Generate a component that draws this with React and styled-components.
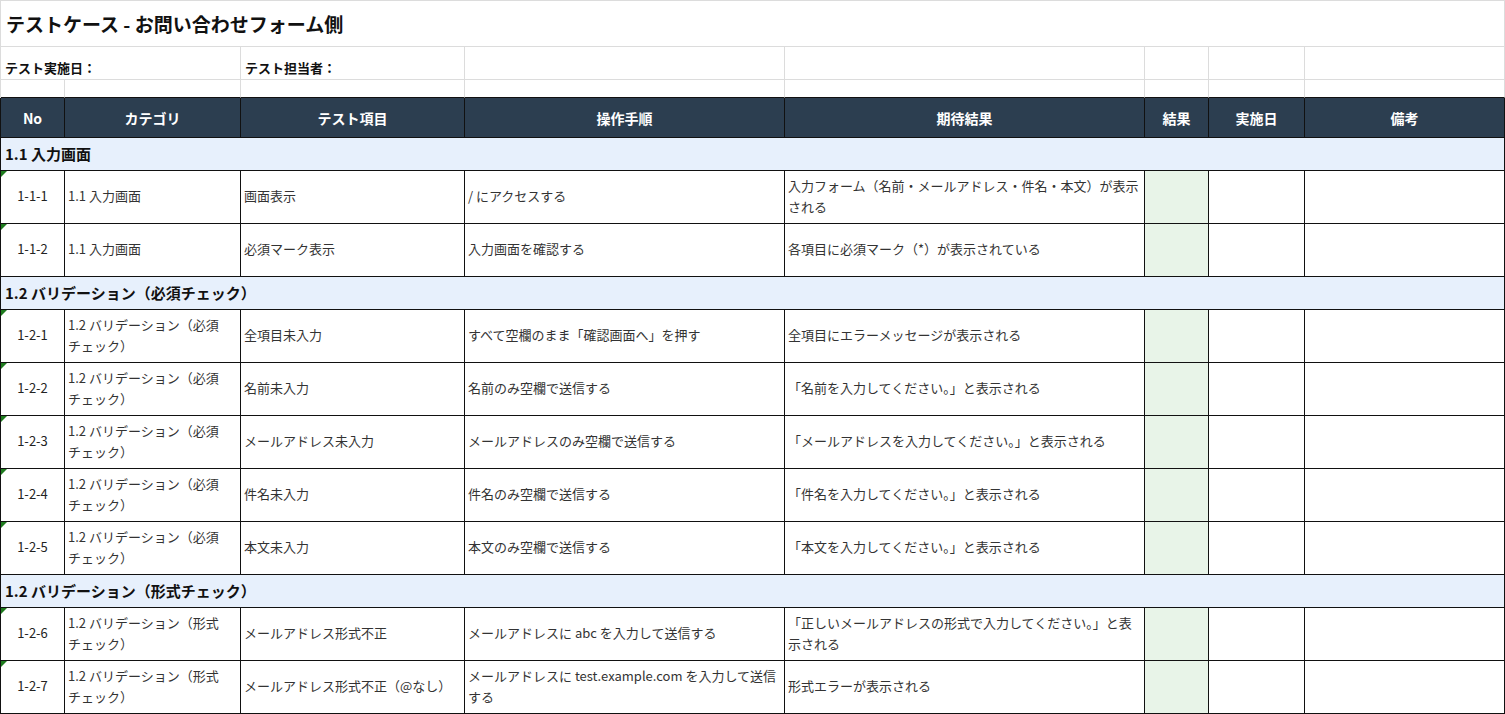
import React from 'react';
import styled, { createGlobalStyle } from 'styled-components';

const GlobalStyle = createGlobalStyle`
  html, body {
    margin: 0;
    padding: 0;
    background: #fff;
  }
  body {
    font-family: 'Noto Sans CJK JP', 'Noto Sans', sans-serif;
    color: #333;
  }
`;

const COLS = '64px 176px 224px 320px 360px 64px 96px 200px';
const GRID = '#dcdcdc';
const LINE = '#111';

const Sheet = styled.div`
  width: 1505px;
  border-top: 1px solid ${GRID};
  overflow: hidden;
`;

const Row = styled.div`
  display: grid;
  grid-template-columns: ${COLS};
  height: ${p => p.$h}px;
  border-left: 1px solid ${p => (p.$table ? LINE : GRID)};
`;

const Cell = styled.div`
  box-sizing: border-box;
  grid-column: ${p => p.$span || 'auto'};
  position: relative;
  display: flex;
  align-items: ${p => p.$align || 'center'};
  justify-content: ${p => (p.$center ? 'center' : 'flex-start')};
  padding: 0 3px;
  border-right: 1px solid ${p => p.$line || GRID};
  border-bottom: 1px solid ${p => p.$bottom || p.$line || GRID};
  background: ${p => p.$bg || 'transparent'};
  overflow: hidden;
`;

const Title = styled.span`
  font-size: 19px;
  font-weight: 700;
  color: #111;
  padding-left: 2px;
`;

const MetaLabel = styled.span`
  font-size: 13px;
  font-weight: 700;
  color: #111;
  line-height: 20px;
  padding: 0 0 1px 1px;
`;

const HeadCell = styled(Cell)`
  background: #2c3e50;
  color: #fff;
  font-size: 14px;
  font-weight: 700;
`;

const SectionCell = styled(Cell)`
  background: #e7f0fc;
  font-size: 15px;
  font-weight: 700;
  color: #111;
  padding: 0 0 2px 4px;
`;

const DataText = styled.span`
  font-size: 13px;
  line-height: 21px;
  color: #333;
  white-space: pre-line;
  padding-bottom: 3px;
`;

const NoText = styled(DataText)`
  color: #222;
`;

const Marker = styled.span`
  position: absolute;
  left: 0;
  top: 0;
  width: 0;
  height: 0;
  border-top: 6px solid #1e7b1e;
  border-right: 6px solid transparent;
`;

const headers = ['No', 'カテゴリ', 'テスト項目', '操作手順', '期待結果', '結果', '実施日', '備考'];

const sections = [
  {
    title: '1.1 入力画面',
    rows: [
      ['1-1-1', '1.1 入力画面', '画面表示', '/ にアクセスする', '入力フォーム（名前・メールアドレス・件名・本文）が表示\nされる'],
      ['1-1-2', '1.1 入力画面', '必須マーク表示', '入力画面を確認する', '各項目に必須マーク（*）が表示されている'],
    ],
  },
  {
    title: '1.2 バリデーション（必須チェック）',
    rows: [
      ['1-2-1', '1.2 バリデーション（必須\nチェック）', '全項目未入力', 'すべて空欄のまま「確認画面へ」を押す', '全項目にエラーメッセージが表示される'],
      ['1-2-2', '1.2 バリデーション（必須\nチェック）', '名前未入力', '名前のみ空欄で送信する', '「名前を入力してください。」と表示される'],
      ['1-2-3', '1.2 バリデーション（必須\nチェック）', 'メールアドレス未入力', 'メールアドレスのみ空欄で送信する', '「メールアドレスを入力してください。」と表示される'],
      ['1-2-4', '1.2 バリデーション（必須\nチェック）', '件名未入力', '件名のみ空欄で送信する', '「件名を入力してください。」と表示される'],
      ['1-2-5', '1.2 バリデーション（必須\nチェック）', '本文未入力', '本文のみ空欄で送信する', '「本文を入力してください。」と表示される'],
    ],
  },
  {
    title: '1.2 バリデーション（形式チェック）',
    rows: [
      ['1-2-6', '1.2 バリデーション（形式\nチェック）', 'メールアドレス形式不正', 'メールアドレスに abc を入力して送信する', '「正しいメールアドレスの形式で入力してください。」と表\n示される'],
      ['1-2-7', '1.2 バリデーション（形式\nチェック）', 'メールアドレス形式不正（@なし）', 'メールアドレスに test.example.com を入力して送信\nする', '形式エラーが表示される'],
    ],
  },
];

const DataRow = ({ row }) => {
  const [no, cat, item, step, expect] = row;
  return (
    <Row $h={53} $table>
      <Cell $line={LINE} $center>
        <Marker />
        <NoText>{no}</NoText>
      </Cell>
      <Cell $line={LINE}><DataText>{cat}</DataText></Cell>
      <Cell $line={LINE}><DataText>{item}</DataText></Cell>
      <Cell $line={LINE}><DataText>{step}</DataText></Cell>
      <Cell $line={LINE}><DataText>{expect}</DataText></Cell>
      <Cell $line={LINE} $bg="#e8f4e8" />
      <Cell $line={LINE} />
      <Cell $line={LINE} />
    </Row>
  );
};

const App = () => (
  <>
    <GlobalStyle />
    <Sheet>
      <Row $h={46}>
        <Cell $span="1 / -1"><Title>テストケース - お問い合わせフォーム側</Title></Cell>
      </Row>
      <Row $h={33}>
        <Cell $span="1 / 3" $align="flex-end"><MetaLabel>テスト実施日：</MetaLabel></Cell>
        <Cell $align="flex-end"><MetaLabel>テスト担当者：</MetaLabel></Cell>
        <Cell />
        <Cell />
        <Cell />
        <Cell />
        <Cell />
      </Row>
      <Row $h={18}>
        {headers.map(h => (
          <Cell key={h} $bottom={LINE} />
        ))}
      </Row>
      <Row $h={40} $table>
        {headers.map(h => (
          <HeadCell key={h} $line={LINE} $center>{h}</HeadCell>
        ))}
      </Row>
      {sections.map(sec => (
        <React.Fragment key={sec.title}>
          <Row $h={33} $table>
            <SectionCell $span="1 / -1" $line={LINE}>{sec.title}</SectionCell>
          </Row>
          {sec.rows.map(r => (
            <DataRow key={r[0]} row={r} />
          ))}
        </React.Fragment>
      ))}
    </Sheet>
  </>
);

export default App;
